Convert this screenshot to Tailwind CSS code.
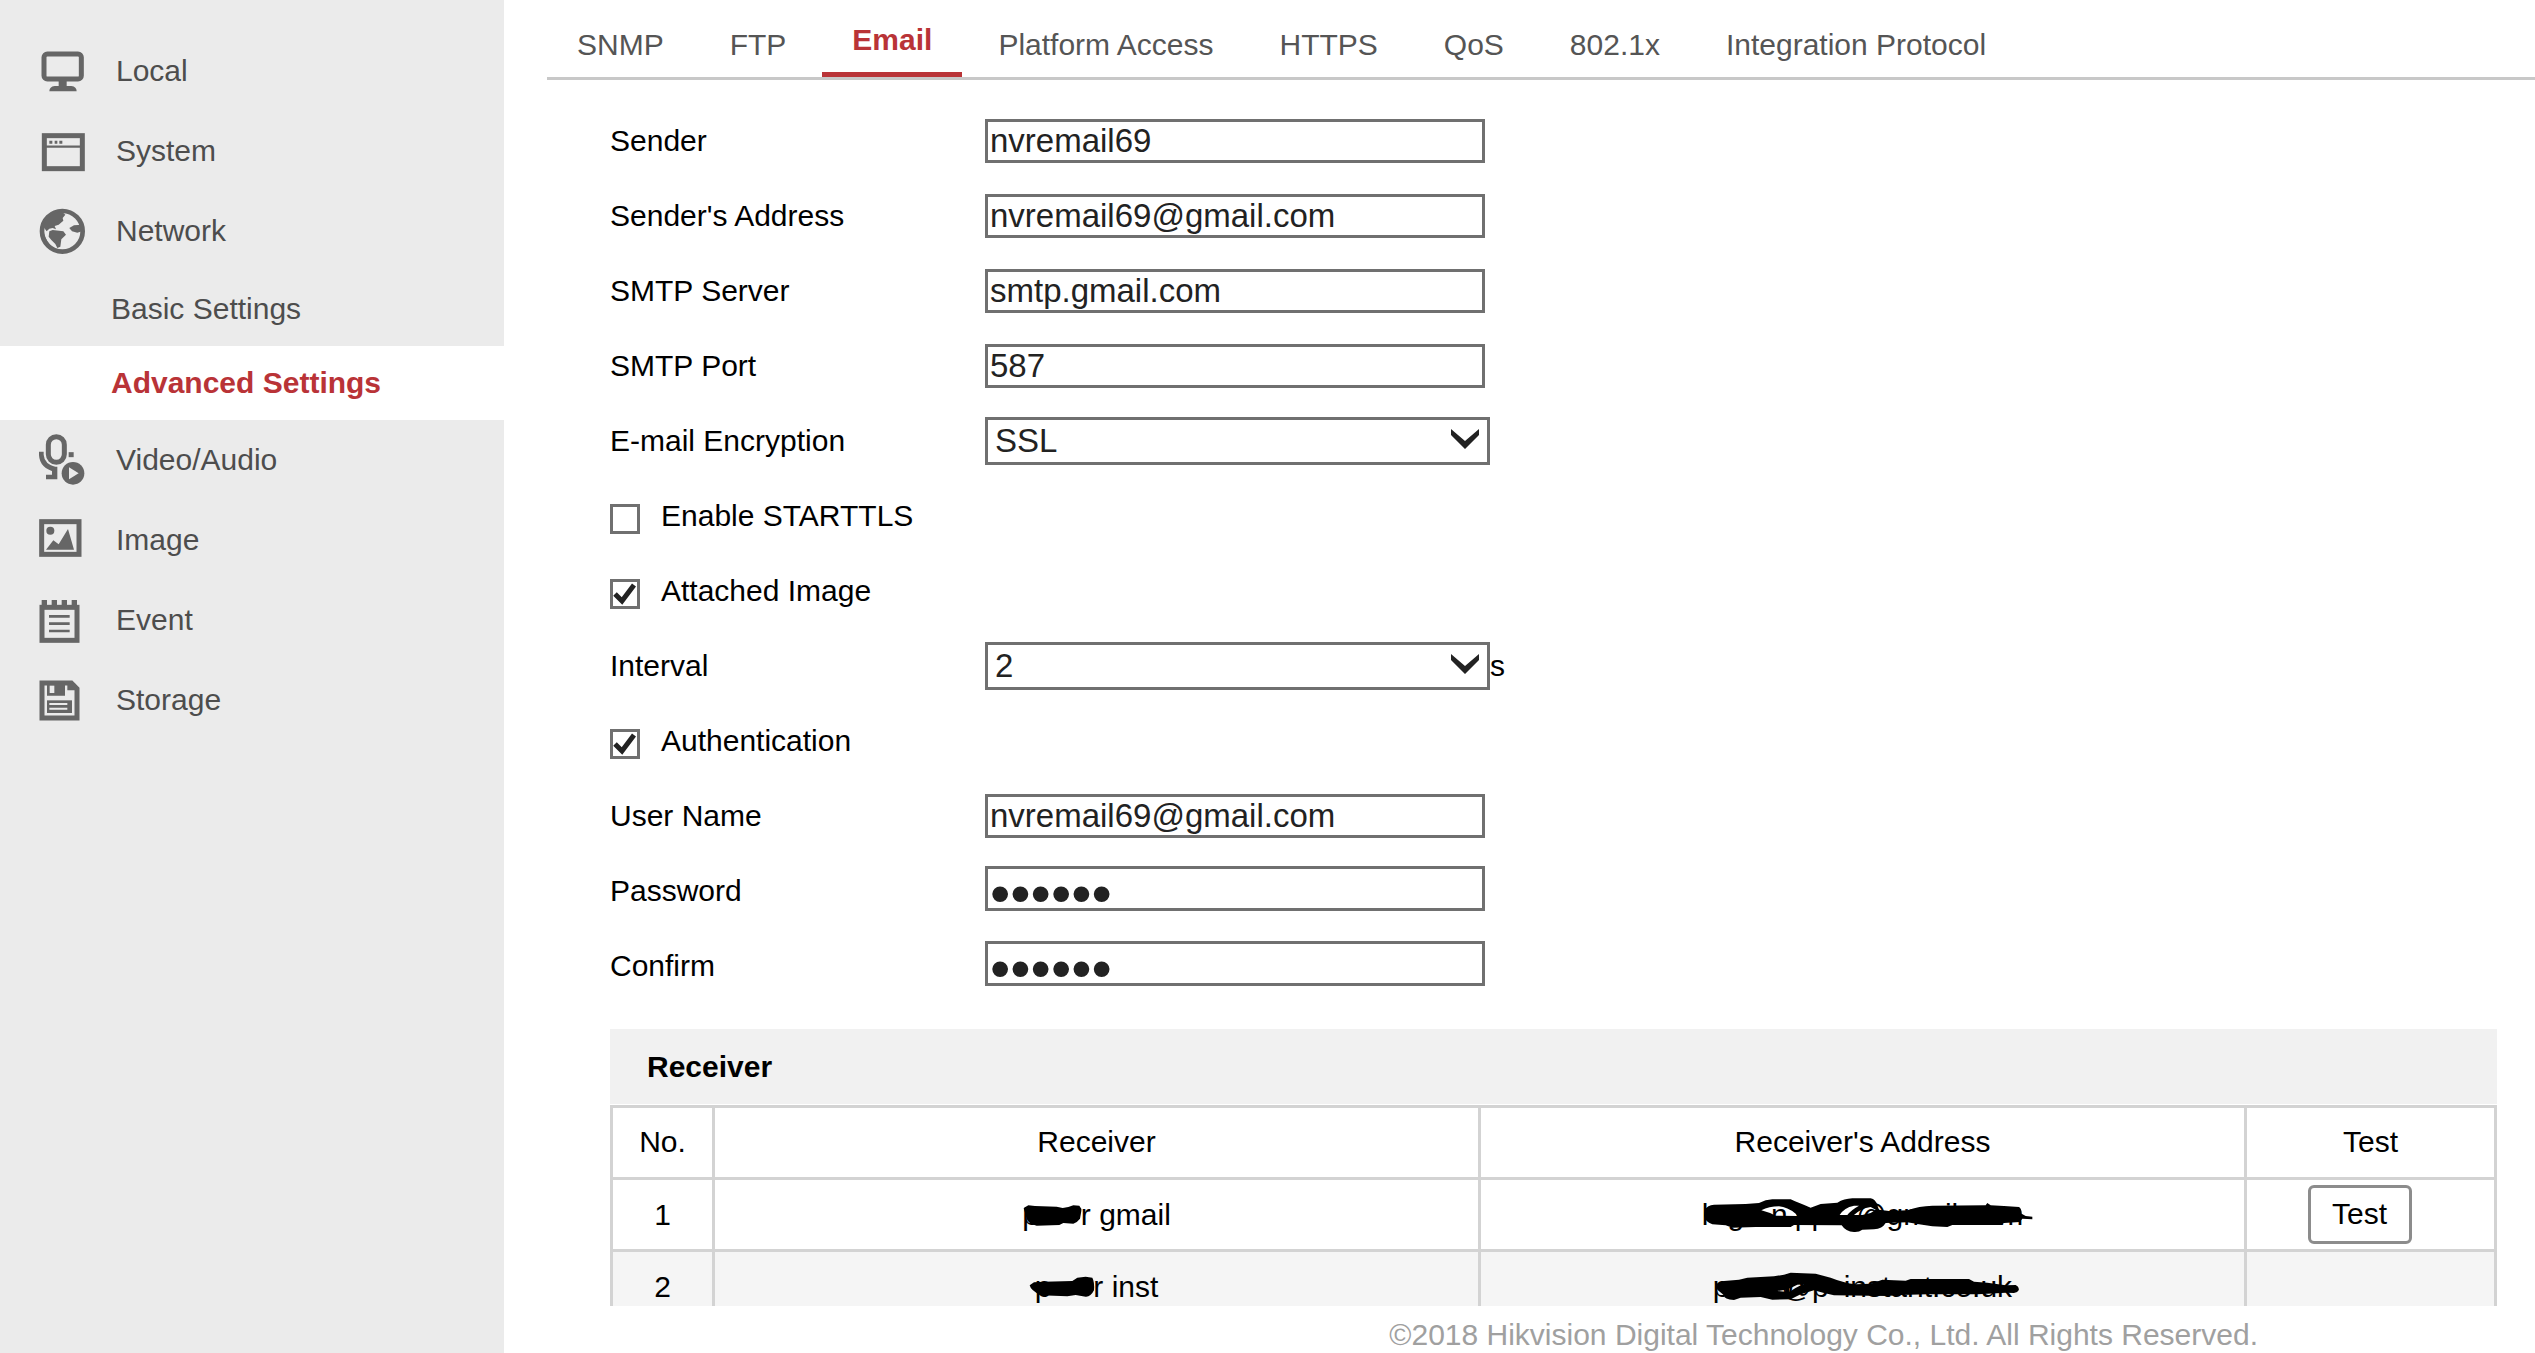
<!DOCTYPE html>
<html lang="en">
<head>
  <meta charset="UTF-8">
  <meta name="viewport" content="width=device-width, initial-scale=1.0">
  <title>Configuration - Email</title>
  <script src="https://cdn.jsdelivr.net/npm/@tailwindcss/browser@4"></script>
</head>
<body class="bg-white text-black text-[30px] leading-9 font-['Liberation_Sans',Arial,sans-serif]">
  <div class="flex h-screen overflow-hidden">
    <!-- Side Menu -->
    <nav class="w-[504px] shrink-0 bg-[#ebebeb] pt-[31px] text-[#4d4d4d]">
      <a href="#" class="flex items-center h-20 pl-9 gap-8">
        <svg class="size-12 overflow-visible" viewBox="108 141 144 144" fill="none" stroke="#666">
          <rect x="132" y="162" width="112" height="75" rx="10" stroke-width="15" />
          <path d="M176 240h24v18h14q16 2 16 16h-82q0-14 16-16h12z" fill="#666" stroke="none" />
        </svg>
        Local
      </a>
      <a href="#" class="flex items-center h-20 pl-9 gap-8">
        <svg class="size-12 overflow-visible" viewBox="108 381 144 144" fill="none" stroke="#666">
          <rect x="133" y="407" width="114" height="99" stroke-width="15" />
          <path d="M138 440h104" stroke-width="7" />
          <path d="M148 427h9m7 0h8m6 0h9" stroke-width="9" />
        </svg>
        System
      </a>
      <a href="#" class="flex items-center h-20 pl-9 gap-8">
        <svg class="size-12 overflow-visible" viewBox="108 621 144 144" fill="#666">
          <circle cx="187" cy="694" r="61" fill="none" stroke="#666" stroke-width="14" />
          <path d="M130 680q8-35 52-48l14 12-8 10 2 8-14 12-12 4 4 10-10-4-10 2-8 8z" />
          <path d="M148 694l10-4 32 4 8 10-14 14-3 22-9 4-6-12-12-12-8-10z" />
          <path d="M246 674l-24 2-14 8 8 10 16 4 14-4z" />
          <path d="M132 700q6 24 28 46l-14 0-20-30z" />
        </svg>
        Network
      </a>
      <a href="#" class="flex items-center h-[75px] pl-[111px]">Basic Settings</a>
      <a href="#" class="flex items-center h-[74px] pl-[111px] bg-white font-bold text-[#b93337]">Advanced Settings</a>
      <a href="#" class="flex items-center h-20 pl-9 gap-8">
        <svg class="size-12 overflow-visible" viewBox="108 108 144 144" fill="none" stroke="#666">
          <rect x="145" y="110" width="48" height="77" rx="24" stroke-width="15" />
          <path d="M124 155v10q2 34 44 44" stroke-width="14" />
          <path d="M156 200h16v38h-34v-14h18z" fill="#666" stroke="none" />
          <path d="M206 164h15" stroke-width="15" />
          <circle cx="219" cy="220" r="34" fill="#666" stroke="none" />
          <path d="M207 202l29 18-29 18z" fill="#ebebeb" stroke="none" />
        </svg>
        Video/Audio
      </a>
      <a href="#" class="flex items-center h-20 pl-9 gap-8">
        <svg class="size-12 overflow-visible" viewBox="108 348 144 144" fill="#666">
          <rect x="125" y="365" width="112" height="98" fill="none" stroke="#666" stroke-width="15" />
          <circle cx="151" cy="392" r="12" />
          <path d="M138 449l22-28 16 12 28-46 18 62z" />
        </svg>
        Image
      </a>
      <a href="#" class="flex items-center h-20 pl-9 gap-8">
        <svg class="size-12 overflow-visible" viewBox="108 588 144 144" fill="none" stroke="#666">
          <rect x="126" y="622" width="105" height="99" stroke-width="15" />
          <path d="M133 600v20m30-20v20m30-20v20m30-20v20" stroke-width="16" />
          <path d="M147 649h62m-62 22h62m-62 22h62" stroke-width="8" />
        </svg>
        Event
      </a>
      <a href="#" class="flex items-center h-20 pl-9 gap-8">
        <svg class="size-12 overflow-visible" viewBox="108 828 144 144" fill="none" stroke="#666">
          <path d="M126 849h88l17 17v88h-105z" stroke-width="15" />
          <path d="M141 851h54v36h-54zM202 851h24v20h-24z" fill="#666" stroke="none" />
          <path d="M149 857h14v22h-14z" fill="#ebebeb" stroke="none" />
          <path d="M141 901h75v38h-75z" fill="#666" stroke="none" />
          <path d="M148 912h54m-54 14h54" stroke="#ebebeb" stroke-width="6" />
        </svg>
        Storage
      </a>
    </nav>

    <div class="flex flex-col flex-1 min-w-0">
      <main class="flex-1 min-h-0 overflow-hidden">
        <!-- Tabs -->
        <div class="flex items-end gap-1.5 ml-[43px] pt-[7px] border-b-3 border-[#c8c8c8] leading-[65px] text-[#555]">
          <a href="#" class="px-[30px]">SNMP</a>
          <a href="#" class="px-[30px]">FTP</a>
          <a href="#" class="px-[30px] font-bold text-[#b93337] border-b-5 border-[#b93337]">Email</a>
          <a href="#" class="px-[30px]">Platform Access</a>
          <a href="#" class="px-[30px]">HTTPS</a>
          <a href="#" class="px-[30px]">QoS</a>
          <a href="#" class="px-[30px]">802.1x</a>
          <a href="#" class="px-[30px]">Integration Protocol</a>
        </div>

        <div class="pt-[23px] pl-[106px] pr-[38px]">
          <!-- Email Form -->
          <form>
            <div class="flex items-center h-[75px]">
              <label for="sender" class="w-[375px]">Sender</label>
              <input id="sender" type="text" value="nvremail69" class="w-[500px] h-11 pl-0.5 border-3 border-[#707070] text-[33px] text-[#222]">
            </div>
            <div class="flex items-center h-[75px]">
              <label for="address" class="w-[375px]">Sender's Address</label>
              <input id="address" type="text" value="nvremail69@gmail.com" class="w-[500px] h-11 pl-0.5 border-3 border-[#707070] text-[33px] text-[#222]">
            </div>
            <div class="flex items-center h-[75px]">
              <label for="server" class="w-[375px]">SMTP Server</label>
              <input id="server" type="text" value="smtp.gmail.com" class="w-[500px] h-11 pl-0.5 border-3 border-[#707070] text-[33px] text-[#222]">
            </div>
            <div class="flex items-center h-[75px]">
              <label for="port" class="w-[375px]">SMTP Port</label>
              <input id="port" type="text" value="587" class="w-[500px] h-11 pl-0.5 border-3 border-[#707070] text-[33px] text-[#222]">
            </div>
            <div class="flex items-center h-[75px]">
              <label for="encryption" class="w-[375px]">E-mail Encryption</label>
              <div class="relative">
                <select id="encryption" class="block appearance-none w-[505px] h-12 pl-[7px] border-3 border-[#707070] text-[33px] text-[#222]">
                  <option>SSL</option>
                  <option>TLS</option>
                </select>
                <svg class="absolute right-[11px] top-3 w-7 h-5 pointer-events-none" viewBox="0 0 28 20" fill="#222"><path d="M0 0l14 12L28 0v6L14 20 0 6z" /></svg>
              </div>
            </div>
            <div class="flex items-center h-[75px] gap-[21px]">
              <span class="grid mt-[7px]">
                <input id="starttls" type="checkbox" class="peer col-start-1 row-start-1 appearance-none size-[30px] border-3 border-[#707070]">
                <svg class="hidden peer-checked:block col-start-1 row-start-1 size-[30px] pointer-events-none" viewBox="0 0 30 30" fill="none" stroke="#222" stroke-width="5"><path d="M5 15l7 7L24 6" /></svg>
              </span>
              <label for="starttls">Enable STARTTLS</label>
            </div>
            <div class="flex items-center h-[75px] gap-[21px]">
              <span class="grid mt-[7px]">
                <input id="attached" type="checkbox" checked class="peer col-start-1 row-start-1 appearance-none size-[30px] border-3 border-[#707070]">
                <svg class="hidden peer-checked:block col-start-1 row-start-1 size-[30px] pointer-events-none" viewBox="0 0 30 30" fill="none" stroke="#222" stroke-width="5"><path d="M5 15l7 7L24 6" /></svg>
              </span>
              <label for="attached">Attached Image</label>
            </div>
            <div class="flex items-center h-[75px]">
              <label for="interval" class="w-[375px]">Interval</label>
              <div class="relative">
                <select id="interval" class="block appearance-none w-[505px] h-12 pl-[7px] border-3 border-[#707070] text-[33px] text-[#222]">
                  <option>2</option>
                  <option>3</option>
                  <option>4</option>
                  <option>5</option>
                </select>
                <svg class="absolute right-[11px] top-3 w-7 h-5 pointer-events-none" viewBox="0 0 28 20" fill="#222"><path d="M0 0l14 12L28 0v6L14 20 0 6z" /></svg>
              </div>
              <span>s</span>
            </div>
            <div class="flex items-center h-[75px] gap-[21px]">
              <span class="grid mt-[7px]">
                <input id="auth" type="checkbox" checked class="peer col-start-1 row-start-1 appearance-none size-[30px] border-3 border-[#707070]">
                <svg class="hidden peer-checked:block col-start-1 row-start-1 size-[30px] pointer-events-none" viewBox="0 0 30 30" fill="none" stroke="#222" stroke-width="5"><path d="M5 15l7 7L24 6" /></svg>
              </span>
              <label for="auth">Authentication</label>
            </div>
            <div class="flex items-center h-[75px]">
              <label for="username" class="w-[375px]">User Name</label>
              <input id="username" type="text" value="nvremail69@gmail.com" class="w-[500px] h-11 pl-0.5 border-3 border-[#707070] text-[33px] text-[#222]">
            </div>
            <div class="flex items-center h-[75px]">
              <label for="password" class="w-[375px]">Password</label>
              <input id="password" type="password" value="secret" class="w-[500px] h-[45px] mb-1 pt-2 pl-0.5 border-3 border-[#707070] text-[58px] leading-8 text-[#222]">
            </div>
            <div class="flex items-center h-[75px]">
              <label for="confirm" class="w-[375px]">Confirm</label>
              <input id="confirm" type="password" value="secret" class="w-[500px] h-[45px] mb-1 pt-2 pl-0.5 border-3 border-[#707070] text-[58px] leading-8 text-[#222]">
            </div>
          </form>

          <!-- Receiver Table -->
          <h2 class="flex items-center h-[75px] mt-[26px] mb-px pl-[37px] bg-[#f1f1f1] font-bold">Receiver</h2>
          <table class="w-full table-fixed border-collapse text-center">
            <colgroup>
              <col class="w-[102px]">
              <col>
              <col>
              <col class="w-[250px]">
            </colgroup>
            <thead>
              <tr class="h-[72px]">
                <th class="p-0 pb-0.5 border-3 border-[#d3d3d3] font-normal">No.</th>
                <th class="p-0 pb-0.5 border-3 border-[#d3d3d3] font-normal">Receiver</th>
                <th class="p-0 pb-0.5 border-3 border-[#d3d3d3] font-normal">Receiver's Address</th>
                <th class="p-0 pb-0.5 border-3 border-[#d3d3d3] font-normal">Test</th>
              </tr>
            </thead>
            <tbody>
              <tr class="h-[72px]">
                <td class="p-0 border-3 border-[#d3d3d3]">1</td>
                <td class="p-0 border-3 border-[#d3d3d3]">
                  <span class="relative inline-block">p<span class="inline-block w-[42px]"></span>r gmail
                    <svg class="absolute left-0 top-0 w-[60px] h-9 overflow-visible" viewBox="36 20 180 108"><path d="M41 53L55 45l20 2 65 2 18 4 17-3 15-5 18 1q8 9 6 16l-4 23q-10 13-20 15l-30-2-12 6-68 2q-25-6-30-21l-4-15z" /></svg>
                  </span>
                </td>
                <td class="p-0 border-3 border-[#d3d3d3]">
                  <span class="relative inline-block">l<span class="inline-block w-[19px]"></span>g<span class="inline-block w-[27px]"></span>n<span class="inline-block w-[7px]"></span>pp<span class="inline-block w-7"></span>@gmail.com
                    <svg class="absolute left-0 top-0 w-[334px] h-9 overflow-visible" viewBox="309 320 1002 108" fill-rule="evenodd"><path d="M315 375L318 358Q325 345 345 343L440 341 480 338Q500 328 520 327L575 327Q600 338 635 352L665 341 715 337Q735 325 760 324L815 324Q830 327 835 345L840 358 870 362 925 360Q960 347 1000 346L1160 345 1165 338 1175 345 1215 347 1260 350Q1268 355 1268 370L1280 377 1300 379 1300 387 1270 385 1262 395 1215 398 1205 404 1060 404 1045 410 1000 408 960 402 925 396 860 398Q850 415 825 417L790 418Q780 426 765 425 740 424 728 405L585 404 575 410 470 410 400 412 380 405 340 402Q318 395 315 375ZM487 360Q510 348 540 348 565 350 590 370L595 377 530 376Q510 366 487 360ZM722 374Q735 352 765 346L780 346Q755 360 745 374ZM765 374Q785 355 815 350L830 358 815 368 790 374Z" /></svg>
                  </span>
                </td>
                <td class="p-0 pr-[22px] border-3 border-[#d3d3d3]">
                  <button type="button" class="block mx-auto w-[104px] h-[59px] pb-0.5 border-3 border-[#8c8c8c] rounded-md">Test</button>
                </td>
              </tr>
              <tr class="h-[72px] bg-[#f5f5f5]">
                <td class="p-0 border-3 border-[#d3d3d3]">2</td>
                <td class="p-0 border-3 border-[#d3d3d3]">
                  <span class="relative inline-block">p<span class="inline-block w-[42px]"></span>r inst
                    <svg class="absolute -left-1.5 top-0 w-[66px] h-9 overflow-visible" viewBox="55 236 198 108"><path d="M57 285L70 276l30-2 85-2 15-10 25-3 20 3q7 13 5 38-10 20-25 19l-30-5-25 4-80-3Q60 300 57 285z" /></svg>
                  </span>
                </td>
                <td class="p-0 border-3 border-[#d3d3d3]">
                  <span class="relative inline-block">p<span class="inline-block w-[52px]"></span>@p<span class="inline-block w-[15px]"></span>instant.co.uk
                    <svg class="absolute left-0 top-0 w-[310px] h-9 overflow-visible" viewBox="337 536 930 108" fill-rule="evenodd"><path d="M348 590Q350 575 370 572L415 568 440 562 520 558 550 553 570 547 645 550 690 562Q730 578 765 582L810 580 845 568 915 571 930 566 1105 566 1120 574 1160 577 1215 585 1245 584Q1257 590 1254 600 1250 608 1240 608L1215 607 1160 610 1130 612 1080 612 980 612 900 614 860 617 700 615 670 608 640 600 600 612 570 627 515 628 480 620 420 622 400 629Q370 628 370 615L350 598ZM530 602L555 598 553 604ZM565 595L590 583 610 582Q580 592 568 606Z" /></svg>
                  </span>
                </td>
                <td class="p-0 border-3 border-[#d3d3d3]"></td>
              </tr>
            </tbody>
          </table>
        </div>
      </main>

      <footer class="shrink-0 h-[47px] pt-[11px] pr-[277px] text-right text-[#a0a0a0]">©2018 Hikvision Digital Technology Co., Ltd. All Rights Reserved.</footer>
    </div>
  </div>
</body>
</html>
